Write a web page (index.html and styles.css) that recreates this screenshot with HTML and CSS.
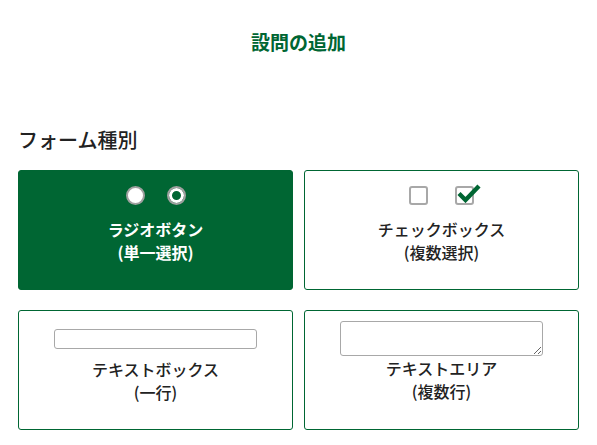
FILE: index.html
```html
<!DOCTYPE html>
<html lang="ja">
<head>
  <meta charset="UTF-8" />
  <meta name="viewport" content="width=device-width, initial-scale=1.0" />
  <title>設問の追加</title>
  <link rel="stylesheet" href="styles.css">
</head>
<body>
  <div class="page">
    <h1 class="title">設問の追加</h1>
    <h2 class="label">フォーム種別</h2>

    <div class="types">
      <div class="type type-radio selected">
        <div class="icons">
          <span class="radio"></span>
          <span class="radio on"></span>
        </div>
        <p class="name">ラジオボタン<br>(単一選択)</p>
      </div>

      <div class="type type-check">
        <div class="icons">
          <span class="check"></span>
          <span class="check on">
            <svg viewBox="0 0 24 20" width="24" height="20"><path d="M2 10.5 L8.5 17 L22 3" fill="none" stroke="#006633" stroke-width="4.4" stroke-linejoin="miter"/></svg>
          </span>
        </div>
        <p class="name">チェックボックス<br>(複数選択)</p>
      </div>

      <div class="type type-text">
        <input class="demo-input" type="text" readonly />
        <p class="name">テキストボックス<br>(一行)</p>
      </div>

      <div class="type type-area">
        <textarea class="demo-area" readonly></textarea>
        <p class="name">テキストエリア<br>(複数行)</p>
      </div>
    </div>
  </div>
</body>
</html>
```

FILE: styles.css
```css
body { margin: 0; background: #fff; color: #222; font-family: "Noto Sans CJK JP", "Noto Sans", sans-serif; }
.page { padding: 0 18px; }
.title { margin: 29px 0 0; font-size: 19px; line-height: 26px; font-weight: 700; color: #006633; text-align: center; }
.label { margin: 71px 0 16px; font-size: 20px; line-height: 28px; font-weight: 500; color: #222; }

.types { display: grid; grid-template-columns: 1fr 1fr; column-gap: 11px; row-gap: 20px; }
.type { box-sizing: border-box; height: 120px; border: 1px solid #006633; border-radius: 3px; background: #fff; display: flex; flex-direction: column; align-items: center; }
.type.selected { background: #006633; color: #fff; }
.type.selected .name { font-weight: 700; }

.name { margin: 0; font-size: 16px; line-height: 23px; font-weight: 500; text-align: center; color: inherit; }

.icons { display: flex; height: 19px; align-items: center; }
.type-radio, .type-check { padding-top: 15px; }
.type-radio .name, .type-check .name { margin-top: 13px; }
.type-radio .icons { gap: 22px; }
.type-check .icons { gap: 27px; }

.radio { box-sizing: border-box; width: 19px; height: 19px; border-radius: 50%; border: 2px solid #a0a0a0; background: #fff; }
.radio.on { background: #006633; box-shadow: inset 0 0 0 3px #fff; }

.check { position: relative; box-sizing: border-box; width: 19px; height: 19px; border: 2px solid #a8a8a8; border-radius: 3px; background: #fff; }
.check svg { position: absolute; left: 0; top: -5px; }

.type-text { padding-top: 18px; }
.demo-input { box-sizing: border-box; width: 203px; height: 20px; margin: 0; border: 1px solid #a8a8a8; border-radius: 3px; background: #fff; padding: 0 4px; }
.type-text .name { margin-top: 9px; }

.type-area { padding-top: 10px; }
.demo-area { box-sizing: border-box; display: block; width: 203px; height: 35px; margin: 0; border: 1px solid #a8a8a8; border-radius: 3px; background: #fff; padding: 2px 4px; }
.type-area .name { margin-top: 1px; }
```
